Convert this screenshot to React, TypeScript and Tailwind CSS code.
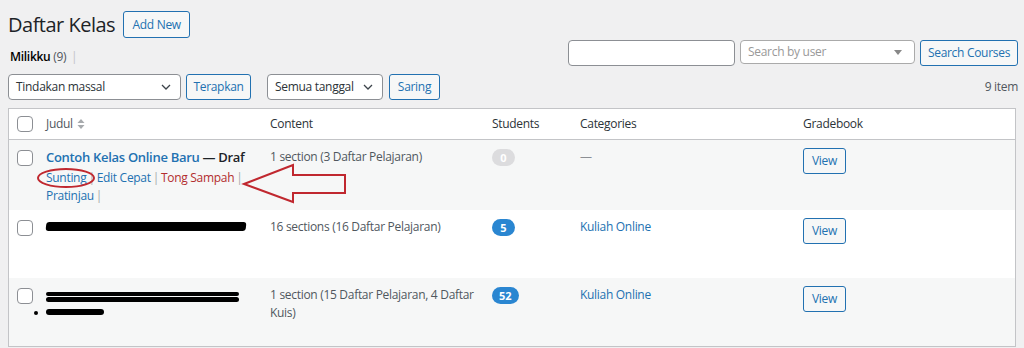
import React from "react";

type Kelas = {
    content: string[];
    students: number;
    category: string | null;
};

const rows: Kelas[] = [
    { content: ["1 section (3 Daftar Pelajaran)"], students: 0, category: null },
    { content: ["16 sections (16 Daftar Pelajaran)"], students: 5, category: "Kuliah Online" },
    { content: ["1 section (15 Daftar Pelajaran, 4 Daftar", "Kuis)"], students: 52, category: "Kuliah Online" },
];

const cols = "grid grid-cols-[29px_224px_222px_88px_223px_1fr]";

function Chevron() {
    return (
        <svg width="16" height="16" viewBox="0 0 20 20" className="text-[#3c434a]">
            <path d="M5 7.5l5 5 5-5" fill="none" stroke="currentColor" strokeWidth="1.6" />
        </svg>
    );
}

function Select({ label, w }: { label: string; w: string }) {
    return (
        <div className={`${w} h-[26px] flex items-center justify-between bg-white border border-[#8c8f94] rounded-[4px] pl-[7px] pr-[6px] text-[#2c3338] whitespace-nowrap`}>
            <span>{label}</span>
            <Chevron />
        </div>
    );
}

function Btn({ label, w }: { label: string; w: string }) {
    return (
        <div className={`${w} h-[26px] flex items-center justify-center bg-[#f6f7f7] border border-[#2271b1] rounded-[3px] text-[#2271b1] whitespace-nowrap`}>
            {label}
        </div>
    );
}

function Checkbox() {
    return <div className="w-4 h-4 bg-white border border-[#8c8f94] rounded-[4px]" />;
}

function Badge({ n }: { n: number }) {
    const bg = n === 0 ? "bg-[#dcdcde]" : "bg-[#2a86d1]";
    return (
        <span className={`${bg} inline-flex items-center justify-center h-[17px] min-w-[23px] px-[7px] rounded-full text-[11px] font-bold text-white leading-none tracking-normal`}>
            {n}
        </span>
    );
}

function Sep() {
    return <span className="mx-[2px] text-[#a7aaad]">|</span>;
}

function TitleCell({ i }: { i: number }) {
    if (i === 0) {
        return (
            <div className="relative whitespace-nowrap">
                <div className="text-[13px] leading-[19px]">
                    <span className="font-semibold text-[#2271b1]">Contoh Kelas Online Baru</span>
                    <span className="font-semibold text-[#1d2327]"> — Draf</span>
                </div>
                <div className="mt-[2px] leading-[18px]">
                    <span className="text-[#2271b1]">Sunting</span>
                    <Sep />
                    <span className="text-[#2271b1]">Edit Cepat</span>
                    <Sep />
                    <span className="text-[#b32d2e]">Tong Sampah</span>
                    <Sep />
                </div>
                <div className="leading-[18px]">
                    <span className="text-[#2271b1]">Pratinjau</span>
                    <Sep />
                </div>
            </div>
        );
    }
    if (i === 1) {
        return (
            <div className="pt-[4px]">
                <div className="w-[200px] h-[9px] bg-black rounded-[3px] -skew-x-6" />
            </div>
        );
    }
    return (
        <div className="relative pt-[6px]">
            <div className="w-[193px] h-[4px] bg-black rounded-full" />
            <div className="w-[193px] h-[5px] mt-[1px] bg-black rounded-full" />
            <div className="w-[58px] h-[6px] mt-[7px] bg-black rounded-full" />
            <div className="absolute left-[-12px] top-[25px] w-[4px] h-[4px] bg-black rounded-full" />
        </div>
    );
}

export default function App() {
    return (
        <div className="relative w-[1024px] h-[348px] overflow-hidden bg-[#f0f0f1] text-[#3c434a] text-[12px] tracking-[-0.3px] font-['Open_Sans',sans-serif]">
            <div className="px-2">
                <div className="flex items-center gap-[8px] pt-[9px] h-[40px]">
                    <h1 className="text-[20px] leading-[29px] tracking-[-0.5px] text-[#1d2327]">Daftar Kelas</h1>
                    <div className="h-[27px] w-[67px] flex items-center justify-center bg-[#f6f7f7] border border-[#2271b1] rounded-[3px] text-[#2271b1]">
                        Add New
                    </div>
                </div>

                <div className="flex justify-between items-start h-[34px]">
                    <div className="pt-[8px] pl-[2px] text-[#50575e]">
                        <span className="font-semibold text-[#000]">Milikku</span> (9) <span className="text-[#c3c4c7] ml-[2px]">|</span>
                    </div>
                    <div className="flex items-start gap-[5px] mr-[-2px]">
                        <div className="w-[167px] h-[26px] bg-white border border-[#8c8f94] rounded-[4px]" />
                        <div className="w-[175px] h-[24px] flex items-center justify-between bg-white border border-[#aaa] rounded-[4px] pl-[7px] pr-[12px] text-[#999]">
                            <span>Search by user</span>
                            <span className="w-0 h-0 border-x-[4px] border-x-transparent border-t-[5px] border-t-[#888]" />
                        </div>
                        <Btn label="Search Courses" w="w-[98px]" />
                    </div>
                </div>

                <div className="flex items-center h-[26px]">
                    <Select label="Tindakan massal" w="w-[173px]" />
                    <div className="ml-[5px]"><Btn label="Terapkan" w="w-[65px]" /></div>
                    <div className="ml-[16px]"><Select label="Semua tanggal" w="w-[116px]" /></div>
                    <div className="ml-[6px]"><Btn label="Saring" w="w-[51px]" /></div>
                    <div className="ml-auto text-[#50575e] mr-[-2px]">9 item</div>
                </div>

                <div className="mt-[8px] bg-white border border-[#c3c4c7]">
                    <div className={`${cols} h-[31px] items-center border-b border-[#c3c4c7] text-[#2c3338]`}>
                        <div className="pl-[8px]"><Checkbox /></div>
                        <div className="pl-[8px] flex items-center gap-[4px] text-[#50575e]">
                            Judul
                            <svg width="8" height="12" viewBox="0 0 8 12">
                                <path d="M4 1l3.5 4h-7z M4 11l3.5-4h-7z" fill="#a7aaad" />
                            </svg>
                        </div>
                        <div className="pl-[8px]">Content</div>
                        <div className="pl-[8px]">Students</div>
                        <div className="pl-[8px]">Categories</div>
                        <div className="pl-[8px]">Gradebook</div>
                    </div>

                    {rows.map((r, i) => (
                        <div key={i} className={`${cols} ${i % 2 === 0 ? "bg-[#f6f7f7]" : "bg-white"} ${i === 0 ? "h-[70px]" : "h-[68px]"} pt-[8px]`}>
                            <div className="pl-[8px] pt-[2px]"><Checkbox /></div>
                            <div className="pl-[8px]"><TitleCell i={i} /></div>
                            <div className="pl-[8px] leading-[18px] text-[#50575e] whitespace-nowrap">
                                {r.content.map((c) => (
                                    <div key={c}>{c}</div>
                                ))}
                            </div>
                            <div className="pl-[8px] pt-[1px]"><Badge n={r.students} /></div>
                            <div className="pl-[8px] leading-[18px]">
                                {r.category ? <span className="text-[#2271b1]">{r.category}</span> : <span className="text-[#8c8f94]">—</span>}
                            </div>
                            <div className="pl-[8px]">
                                <Btn label="View" w="w-[43px]" />
                            </div>
                        </div>
                    ))}
                </div>
            </div>

            {/* red annotation overlay */}
            <svg className="absolute left-0 top-0 pointer-events-none" width="1024" height="348">
                <ellipse cx="66" cy="178" rx="28" ry="9" fill="none" stroke="#c0282f" strokeWidth="2" />
                <polygon points="244,184 293,165 293,175 345,175 345,193 293,193 293,202" fill="none" stroke="#c0282f" strokeWidth="2" />
            </svg>
        </div>
    );
}
